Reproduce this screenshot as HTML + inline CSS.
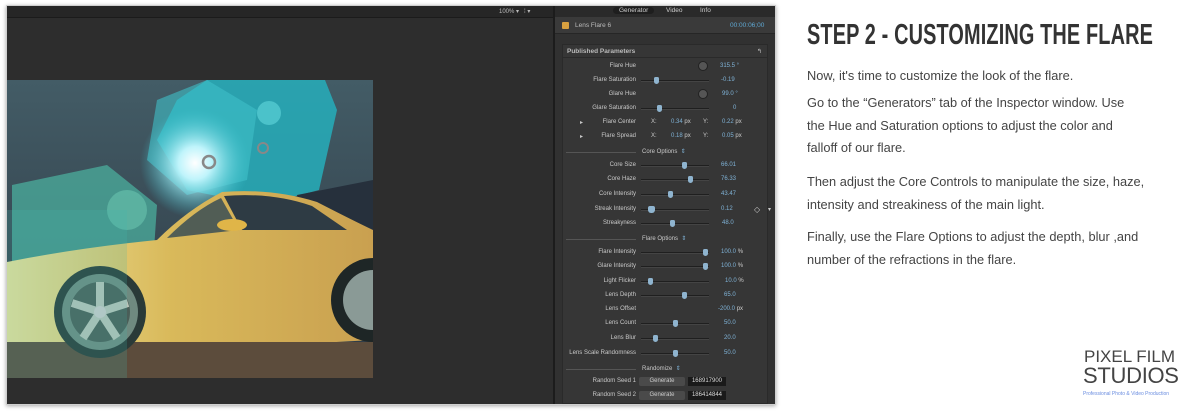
<!DOCTYPE html>
<html><head><meta charset="utf-8"><style>
*{margin:0;padding:0;box-sizing:border-box}
body{width:1191px;height:411px;background:#fff;position:relative;overflow:hidden;font-family:"Liberation Sans",sans-serif}
.shot{position:absolute;left:6px;top:5px;width:770px;height:400px;background:#2d2d2d;box-shadow:0 1px 4px rgba(0,0,0,.35);border:1px solid #cfcfcf}
.topbar{position:absolute;left:7px;top:6px;width:546px;height:12px;background:#262626;border-bottom:1px solid #1b1b1b}
.viewer{position:absolute;left:7px;top:18px;width:546px;height:386px;background:#2d2d2d}
.divider{position:absolute;left:553px;top:6px;width:2px;height:398px;background:#1c1c1c}
.panel{position:absolute;left:555px;top:6px;width:220px;height:398px;background:#313131}
.tabs{position:absolute;left:555px;top:6px;width:220px;height:11px;background:#2a2a2a;color:#ccc;font-size:6.5px}
.hdr{position:absolute;left:555px;top:17px;width:220px;height:17px;background:#3a3a3a;border-bottom:1px solid #262626;font-size:6.5px;color:#bbb}
.box{position:absolute;left:562px;top:44px;width:206px;height:360px;background:#363636;border:1px solid #2a2a2a}
.t{position:absolute;font-size:6px;color:#c9c9c9;white-space:nowrap}
.l{position:absolute;left:555px;width:81px;text-align:right;font-size:6px;color:#c9c9c9;white-space:nowrap}
.v{position:absolute;font-size:6px;color:#7fb2d6;white-space:nowrap}
.tr{position:absolute;left:641px;width:68px;height:2px;background:#1f1f1f;border-bottom:1px solid #444}
.th{position:absolute;width:5px;height:7px;background:#8fb4cf;border-radius:2px 2px 3px 3px}
.dial{position:absolute;left:698px;width:10px;height:10px;border-radius:50%;background:#555;border:1px solid #222}
.sep{position:absolute;left:566px;width:70px;height:1px;background:#555}
.btn{position:absolute;left:639px;width:46px;height:9px;background:#4a4a4a;border-radius:2px;font-size:6px;color:#ccc;text-align:center;line-height:9px}
.num{position:absolute;left:688px;width:38px;height:9px;background:#1a1a1a;font-size:6px;color:#ddd;text-align:center;line-height:9px}
h1{position:absolute;left:807px;top:20px;font-family:"Liberation Sans Narrow","Liberation Sans",sans-serif;font-weight:bold;font-size:29px;color:#333;letter-spacing:0.2px;transform-origin:left top;white-space:nowrap;line-height:30px}
.p{position:absolute;left:807px;font-size:12.8px;color:#444;line-height:22.5px;white-space:nowrap}
</style></head><body>
<div class="shot"></div>
<div class="topbar"><span style="position:absolute;left:492px;top:2px;font-size:6px;color:#bbb">100% ▾ &nbsp; ⁞ ▾</span></div>
<div class="viewer"></div>
<svg style="position:absolute;left:7px;top:80px" width="366" height="298" viewBox="0 0 366 298">
<defs>
<linearGradient id="sky" x1="0" y1="0" x2="0" y2="1"><stop offset="0" stop-color="#435c66"/><stop offset="1" stop-color="#2e3944"/></linearGradient>
<radialGradient id="glow" cx="0.5" cy="0.5" r="0.5"><stop offset="0" stop-color="#fff"/><stop offset="0.3" stop-color="#bff4fb"/><stop offset="1" stop-color="#39c3d0" stop-opacity="0"/></radialGradient>
<linearGradient id="body" x1="0" y1="0" x2="1" y2="0"><stop offset="0" stop-color="#ece29a"/><stop offset="0.45" stop-color="#d9b95a"/><stop offset="1" stop-color="#c9a050"/></linearGradient>
</defs>
<rect width="366" height="298" fill="url(#sky)"/>
<polygon points="200,0 318,0 330,30 312,110 255,125 180,110 150,60 170,20" fill="#26aebb" opacity="0.85"/>
<polygon points="150,20 200,0 250,30 240,100 180,115 140,80" fill="#3fc0c8" opacity="0.6"/>
<polygon points="5,105 100,85 150,125 145,200 60,210 5,195" fill="#4aa898" opacity="0.8"/>
<circle cx="262" cy="33" r="12" fill="#5ad0d6" opacity="0.7"/>
<circle cx="120" cy="130" r="20" fill="#6fcdb6" opacity="0.5"/>
<circle cx="188" cy="83" r="55" fill="url(#glow)"/>
<polygon points="290,115 366,100 366,165 300,160" fill="#26303c"/>
<path d="M0,182 Q70,168 150,160 Q180,130 215,112 Q265,108 310,122 Q345,140 366,150 L366,260 L0,280 Z" fill="url(#body)"/>
<path d="M160,158 Q188,130 214,118 L232,150 Z" fill="#3a4d55" opacity="0.85"/>
<path d="M217,116 Q265,112 305,126 L340,150 L235,150 Z" fill="#2e3b44"/>
<ellipse cx="225" cy="145" rx="15" ry="6" fill="#e0b548"/>
<rect x="0" y="262" width="366" height="36" fill="#5c4c3c"/>
<circle cx="93" cy="232" r="46" fill="#2a3a38"/>
<circle cx="93" cy="232" r="38" fill="#6f8a80"/>
<circle cx="93" cy="232" r="30" fill="#4a5e58"/>
<path d="M93,232 L93,202 M93,232 L121,223 M93,232 L110,258 M93,232 L76,258 M93,232 L65,223" stroke="#b9c4b9" stroke-width="8"/>
<circle cx="93" cy="232" r="6" fill="#ccc"/>
<circle cx="366" cy="220" r="42" fill="#1e2626"/>
<circle cx="366" cy="220" r="30" fill="#8a9a96"/>
<rect x="0" y="130" width="120" height="168" fill="#3fbab0" opacity="0.2"/>
<circle cx="202" cy="82" r="6" fill="none" stroke="#888" stroke-width="2.5"/>
<circle cx="256" cy="68" r="5" fill="none" stroke="#888" stroke-width="2"/>
</svg>
<div class="divider"></div>
<div class="panel"></div>
<div class="tabs"><span style="position:absolute;left:58px;top:1px;background:#1e1e1e;border-radius:5px;padding:0 6px">Generator</span><span style="position:absolute;left:111px;top:1px">Video</span><span style="position:absolute;left:145px;top:1px">Info</span></div>
<div class="hdr"><span style="position:absolute;left:7px;top:5px;width:7px;height:7px;background:#d8a040;border-radius:1px"></span><span style="position:absolute;left:20px;top:5px">Lens Flare 6</span><span style="position:absolute;left:175px;top:5px;color:#5fa8d3">00:00:06;00</span></div>
<div class="box"></div>
<div class="t" style="left:567px;top:48px;font-size:6.5px;font-weight:bold;color:#bbb">Published Parameters</div>
<div class="t" style="left:757px;top:48px">↰</div>
<div style="position:absolute;left:563px;top:57px;width:204px;height:1px;background:#2a2a2a"></div>

<div class="l" style="top:63px">Flare Hue</div><div class="dial" style="top:61px"></div><div class="v" style="left:720px;top:63px">315.5 °</div>
<div class="l" style="top:77px">Flare Saturation</div><div class="tr" style="top:80px"></div><div class="th" style="left:654px;top:77px"></div><div class="v" style="left:721px;top:77px">-0.19</div>
<div class="l" style="top:91px">Glare Hue</div><div class="dial" style="top:89px"></div><div class="v" style="left:722px;top:91px">99.0 °</div>
<div class="l" style="top:105px">Glare Saturation</div><div class="tr" style="top:108px"></div><div class="th" style="left:657px;top:105px"></div><div class="v" style="left:733px;top:105px">0</div>
<div class="t" style="left:580px;top:119px">▸</div><div class="l" style="top:119px">Flare Center</div><div class="t" style="left:651px;top:119px">X:</div><div class="v" style="left:671px;top:119px">0.34 <span style="color:#ccc">px</span></div><div class="t" style="left:703px;top:119px">Y:</div><div class="v" style="left:722px;top:119px">0.22 <span style="color:#ccc">px</span></div>
<div class="t" style="left:580px;top:133px">▸</div><div class="l" style="top:133px">Flare Spread</div><div class="t" style="left:651px;top:133px">X:</div><div class="v" style="left:671px;top:133px">0.18 <span style="color:#ccc">px</span></div><div class="t" style="left:703px;top:133px">Y:</div><div class="v" style="left:722px;top:133px">0.05 <span style="color:#ccc">px</span></div>
<div class="sep" style="top:152px"></div><div class="t" style="left:642px;top:148px">Core Options &nbsp;<span style="color:#7fb2d6">⇕</span></div>
<div class="l" style="top:162px">Core Size</div><div class="tr" style="top:165px"></div><div class="th" style="left:682px;top:162px"></div><div class="v" style="left:721px;top:162px">66.01</div>
<div class="l" style="top:176px">Core Haze</div><div class="tr" style="top:179px"></div><div class="th" style="left:688px;top:176px"></div><div class="v" style="left:721px;top:176px">76.33</div>
<div class="l" style="top:191px">Core Intensity</div><div class="tr" style="top:194px"></div><div class="th" style="left:668px;top:191px"></div><div class="v" style="left:721px;top:191px">43.47</div>
<div class="l" style="top:206px">Streak Intensity</div><div class="tr" style="top:209px"></div><div class="th" style="left:648px;top:206px;width:7px"></div><div class="v" style="left:721px;top:206px">0.12</div><div class="t" style="left:754px;top:205px;font-size:8px">◇</div><div class="t" style="left:768px;top:206px">▾</div>
<div class="l" style="top:220px">Streakyness</div><div class="tr" style="top:223px"></div><div class="th" style="left:670px;top:220px"></div><div class="v" style="left:722px;top:220px">48.0</div>
<div class="sep" style="top:239px"></div><div class="t" style="left:642px;top:235px">Flare Options &nbsp;<span style="color:#7fb2d6">⇕</span></div>
<div class="l" style="top:249px">Flare Intensity</div><div class="tr" style="top:252px"></div><div class="th" style="left:703px;top:249px"></div><div class="v" style="left:721px;top:249px">100.0 <span style="color:#ccc">%</span></div>
<div class="l" style="top:263px">Glare Intensity</div><div class="tr" style="top:266px"></div><div class="th" style="left:703px;top:263px"></div><div class="v" style="left:721px;top:263px">100.0 <span style="color:#ccc">%</span></div>
<div class="l" style="top:278px">Light Flicker</div><div class="tr" style="top:281px"></div><div class="th" style="left:648px;top:278px"></div><div class="v" style="left:725px;top:278px">10.0 <span style="color:#ccc">%</span></div>
<div class="l" style="top:292px">Lens Depth</div><div class="tr" style="top:295px"></div><div class="th" style="left:682px;top:292px"></div><div class="v" style="left:724px;top:292px">65.0</div>
<div class="l" style="top:306px">Lens Offset</div><div class="v" style="left:718px;top:306px">-200.0 <span style="color:#ccc">px</span></div>
<div class="l" style="top:320px">Lens Count</div><div class="tr" style="top:323px"></div><div class="th" style="left:673px;top:320px"></div><div class="v" style="left:724px;top:320px">50.0</div>
<div class="l" style="top:335px">Lens Blur</div><div class="tr" style="top:338px"></div><div class="th" style="left:653px;top:335px"></div><div class="v" style="left:724px;top:335px">20.0</div>
<div class="l" style="top:350px;left:550px;width:86px">Lens Scale Randomness</div><div class="tr" style="top:353px"></div><div class="th" style="left:673px;top:350px"></div><div class="v" style="left:724px;top:350px">50.0</div>
<div class="sep" style="top:369px"></div><div class="t" style="left:642px;top:365px">Randomize &nbsp;<span style="color:#7fb2d6">⇕</span></div>
<div class="l" style="top:378px">Random Seed 1</div><div class="btn" style="top:377px">Generate</div><div class="num" style="top:377px">168917900</div>
<div class="l" style="top:392px">Random Seed 2</div><div class="btn" style="top:391px">Generate</div><div class="num" style="top:391px">186414844</div>

<h1 id="h">STEP 2 - CUSTOMIZING THE FLARE</h1>
<div class="p" style="top:65px">Now, it's time to customize the look of the flare.</div>
<div class="p" style="top:92px">Go to the “Generators” tab of the Inspector window. Use<br>the Hue and Saturation options to adjust the color and<br>falloff of our flare.</div>
<div class="p" style="top:171px">Then adjust the Core Controls to manipulate the size, haze,<br>intensity and streakiness of the main light.</div>
<div class="p" style="top:226px">Finally, use the Flare Options to adjust the depth, blur ,and<br>number of the refractions in the flare.</div>

<div style="position:absolute;left:1084px;top:348px;font-size:17px;color:#444;line-height:18px;white-space:nowrap">PIXEL FILM</div>
<div style="position:absolute;left:1083px;top:365px;font-size:22px;color:#444;line-height:22px;white-space:nowrap;letter-spacing:-0.3px">STUDIOS</div>
<div style="position:absolute;left:1083px;top:391px;font-size:5px;color:#6a8de0;white-space:nowrap">Professional Photo &amp; Video Production</div>
<script>
var h=document.getElementById('h');var w=h.getBoundingClientRect().width;h.style.transform='scaleX('+(346/w)+')';
document.querySelectorAll('.p').forEach(function(p){var lines=p.innerHTML.split('<br>');});
</script>
</body></html>
